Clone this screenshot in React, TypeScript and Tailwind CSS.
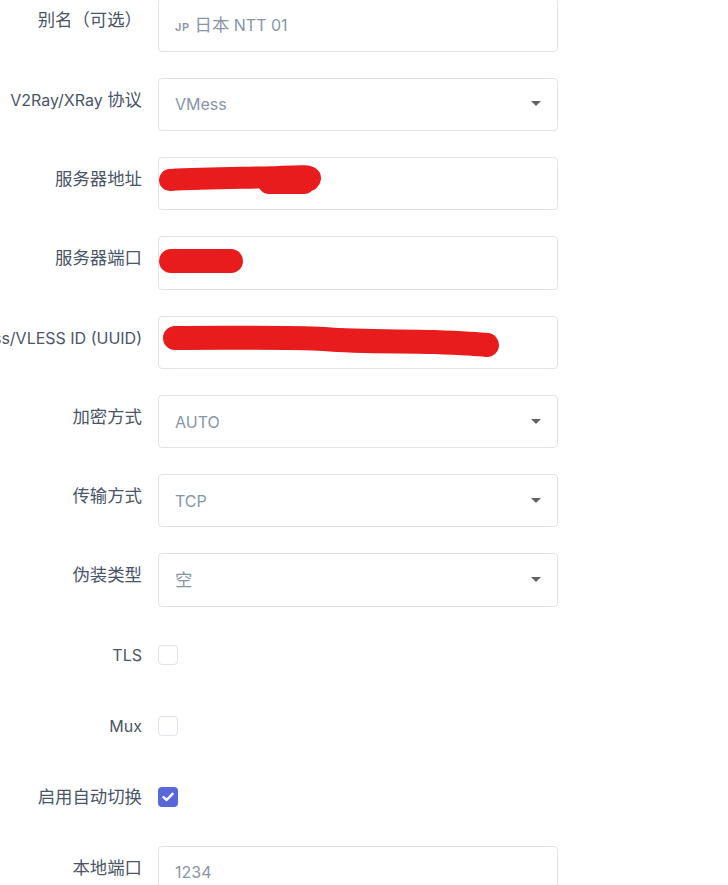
import React from "react";

const font = { fontFamily: "Inter, 'Noto Sans CJK SC', sans-serif" };

function T({ text }: { text: string }) {
  const parts = text.match(/[\u3000-\u9fff\uff00-\uffef]+|[^\u3000-\u9fff\uff00-\uffef]+/g) || [];
  return (
    <>
      {parts.map((p, i) =>
        /[\u3000-\u9fff\uff00-\uffef]/.test(p) ? (
          <span key={i} className="text-[17.4px]">
            {p}
          </span>
        ) : (
          <span key={i}>{p}</span>
        )
      )}
    </>
  );
}

function Label({ text }: { text: string }) {
  return (
    <div className="w-[142px] shrink-0 flex justify-end pt-[10px] pb-[11px] leading-6 text-[16px] text-[#4a5568] whitespace-nowrap">
      <span>
        <T text={text} />
      </span>
    </div>
  );
}

function Arrow() {
  return (
    <svg width="10" height="6" viewBox="0 0 10 6" className="absolute right-[16px] top-1/2 -translate-y-1/2">
      <path d="M0 0 H10 L5 5 Z" fill="#606266" />
    </svg>
  );
}

function Field({
  value,
  select,
  overlay,
}: {
  value?: React.ReactNode;
  select?: boolean;
  overlay?: React.ReactNode;
}) {
  return (
    <div className="relative w-[400px] h-[53.3px] border border-[#dfe3ea] rounded-[4px] bg-white flex items-center pl-[16px] text-[16px] text-[#8795a8] whitespace-nowrap">
      {value}
      {select && <Arrow />}
      {overlay}
    </div>
  );
}

function Check({ checked }: { checked?: boolean }) {
  return (
    <div className="h-[45px] flex items-center">
      {checked ? (
        <div className="w-[20px] h-[20px] rounded-[4px] bg-[#5a67d8] flex items-center justify-center">
          <svg width="12" height="10" viewBox="0 0 12 10">
            <path d="M1.5 5.2 L4.6 8 L10.5 1.8" stroke="white" strokeWidth="2.4" fill="none" strokeLinecap="round" strokeLinejoin="round" />
          </svg>
        </div>
      ) : (
        <div className="w-[20px] h-[20px] rounded-[4px] border border-[#dfe3ea] bg-white" />
      )}
    </div>
  );
}

function Row({ label, children }: { label: string; children: React.ReactNode }) {
  return (
    <div className="flex items-start gap-[16px]">
      <Label text={label} />
      {children}
    </div>
  );
}

export default function App() {
  return (
    <div className="w-[728px] h-[885px] overflow-hidden bg-white" style={font}>
      <div className="flex flex-col gap-[26px] mt-[-1.6px]">
        <Row label="别名（可选）">
          <Field
            value={
              <span>
                <span className="text-[11px] font-semibold mr-[5px] tracking-[0.5px]">JP</span>
                <T text="日本 NTT 01" />
              </span>
            }
          />
        </Row>
        <Row label="V2Ray/XRay 协议">
          <Field value="VMess" select />
        </Row>
        <Row label="服务器地址">
          <Field
            overlay={
              <svg className="absolute left-0 top-0" width="400" height="54" viewBox="0 0 400 54">
                <path d="M11 22 C 50 20, 90 20, 120 19 C 140 18, 155 17, 150 22" stroke="#e81c1c" strokeWidth="22" strokeLinecap="round" fill="none" />
                <path d="M110 25 L145 25" stroke="#e81c1c" strokeWidth="22" strokeLinecap="round" fill="none" />
              </svg>
            }
          />
        </Row>
        <Row label="服务器端口">
          <Field
            overlay={
              <svg className="absolute left-0 top-0" width="400" height="54" viewBox="0 0 400 54">
                <path d="M12 24 L72 24" stroke="#e81c1c" strokeWidth="24" strokeLinecap="round" fill="none" />
              </svg>
            }
          />
        </Row>
        <Row label="VMess/VLESS ID (UUID)">
          <Field
            overlay={
              <svg className="absolute left-0 top-0" width="400" height="54" viewBox="0 0 400 54">
                <path d="M16 21 C 80 21, 130 20, 165 22 C 200 25, 240 24, 275 25 C 300 26, 320 27, 328 28" stroke="#e81c1c" strokeWidth="24" strokeLinecap="round" fill="none" />
              </svg>
            }
          />
        </Row>
        <Row label="加密方式">
          <Field value="AUTO" select />
        </Row>
        <Row label="传输方式">
          <Field value="TCP" select />
        </Row>
        <Row label="伪装类型">
          <Field value={<T text="空" />} select />
        </Row>
        <Row label="TLS">
          <Check />
        </Row>
        <Row label="Mux">
          <Check />
        </Row>
        <Row label="启用自动切换">
          <Check checked />
        </Row>
        <Row label="本地端口">
          <Field value="1234" />
        </Row>
      </div>
    </div>
  );
}
